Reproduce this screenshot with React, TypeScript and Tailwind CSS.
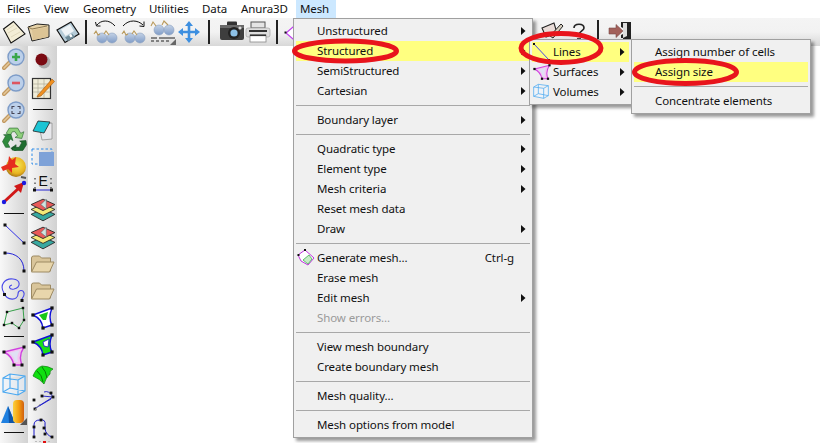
import React from "react";

type P = { className?: string };

const Doc = ({ className }: P) => (
  <svg className={className} width="24" height="24" viewBox="0 0 24 24">
    <path d="M1.5 9 L11.5 1.5 L23 14 L9 23 Z" fill="#f3edd6" stroke="#111" strokeWidth="1.1" />
    <path d="M5 10 L12 5 M6 13 L15 8 M9 17 L18 12" stroke="#e0d8bc" strokeWidth="1" />
  </svg>
);
const Folder = ({ className, w = 24 }: P & { w?: number }) => (
  <svg className={className} width={w} height="24" viewBox="0 0 24 24">
    <path d="M1 7 L10 4 L22 5 L22 17 L5 21 Z" fill="#e6d2a8" stroke="#222" strokeWidth="1" />
    <path d="M1 7 L5 9 L20 6" fill="none" stroke="#8f7a52" strokeWidth="1" />
    <path d="M5 10 L21 7 L21 17 L6 20 Z" fill="#dcc495" />
  </svg>
);
const Floppy = ({ className }: P) => (
  <svg className={className} width="24" height="24" viewBox="0 0 24 24">
    <path d="M1 10 L15 2 L23 14 L9 22.5 Z" fill="#b6ccd8" stroke="#111" strokeWidth="1.2" />
    <path d="M5 9.5 L14 4.5 L18 11 L9.5 16 Z" fill="#eef3f6" />
    <path d="M9 17.5 L16 13.5 L19 17 L12 21 Z" fill="#6f8c9a" />
    <rect x="13" y="15" width="2.4" height="3" fill="#fff" transform="rotate(-30 13 15)" />
  </svg>
);
const Glasses = ({ className, kind }: P & { kind: "l" | "r" | "d" }) => (
  <svg className={className} width="28" height="26" viewBox="0 0 28 26">
    <defs>
      <linearGradient id="gl" x1="0" y1="0" x2="0" y2="1">
        <stop offset="0" stopColor="#c5d3e6" />
        <stop offset="1" stopColor="#7f9cc7" />
      </linearGradient>
    </defs>
    {kind === "d" ? (
      <g>
        <circle cx="10" cy="11" r="5" fill="url(#gl)" stroke="#8aa0c0" strokeWidth=".6" />
        <circle cx="20" cy="11" r="5" fill="url(#gl)" stroke="#8aa0c0" strokeWidth=".6" />
        <path d="M2 7 L4 3 L7 7 M13 6 L15 2 L19 6" fill="none" stroke="#b99a5c" strokeWidth="1.1" />
        <path d="M2 19 H8 M10 19 H26 M2 22 H5 M7 22 H10 M12 22 H15 M17 22 H20" stroke="#222" strokeWidth="1" />
        <path d="M27 20 V26 H21 Z" fill="#666" />
      </g>
    ) : (
      <g>
        <circle cx="9" cy="19" r="5" fill="url(#gl)" stroke="#8aa0c0" strokeWidth=".6" />
        <circle cx="19" cy="19" r="5" fill="url(#gl)" stroke="#8aa0c0" strokeWidth=".6" />
        <path d="M1 15 L3 12 L5 16 L7 15 M11 15 L13 12 L16 16" fill="none" stroke="#b99a5c" strokeWidth="1.1" />
        {kind === "l" ? (
          <path d="M22 7 C16 0 8 1 4 6 M2.5 3 L3.5 7 L7.5 7" fill="none" stroke="#111" strokeWidth="1" />
        ) : (
          <path d="M2 7 C8 0 17 1 22 6 M23 2.5 L23 7.5 L18.5 7" fill="none" stroke="#111" strokeWidth="1" />
        )}
      </g>
    )}
  </svg>
);
const Move = ({ className }: P) => (
  <svg className={className} width="24" height="24" viewBox="0 0 24 24">
    <path d="M12 1 L16 6 H13.3 V10.7 H18 V8 L23 12 L18 16 V13.3 H13.3 V18 H16 L12 23 L8 18 H10.7 V13.3 H6 V16 L1 12 L6 8 V10.7 H10.7 V6 H8 Z" fill="#3d8fe0" />
  </svg>
);
const Camera = ({ className }: P) => (
  <svg className={className} width="26" height="24" viewBox="0 0 26 24">
    <rect x="8" y="1.5" width="10" height="5" rx="1" fill="#333" />
    <rect x="1" y="5" width="24" height="15" rx="2" fill="#3e3e3e" />
    <rect x="1" y="5" width="24" height="3" fill="#6a6a6a" />
    <circle cx="15" cy="13" r="6" fill="#222" />
    <circle cx="15" cy="13" r="3.6" fill="#8cc0e6" />
    <circle cx="21" cy="8" r="1.6" fill="#ddd" />
  </svg>
);
const Printer = ({ className }: P) => (
  <svg className={className} width="26" height="24" viewBox="0 0 26 24">
    <rect x="6" y="2" width="14" height="6" fill="#e4e4e4" stroke="#555" strokeWidth="1" />
    <rect x="1" y="8" width="24" height="9" rx="2" fill="#dedede" stroke="#a4a4a4" strokeWidth=".7" />
    <rect x="4" y="10" width="18" height="2" fill="#333" />
    <rect x="5" y="15" width="16" height="7" fill="#fff" stroke="#888" strokeWidth=".8" />
    <rect x="5" y="14.5" width="16" height="1.6" fill="#333" />
  </svg>
);
const Purple = ({ className }: P) => (
  <svg className={className} width="14" height="24" viewBox="0 0 14 24">
    <path d="M3 13 L10 7 L14 10 V16 L10 19 Z" fill="#fff" stroke="#c040f0" strokeWidth="1.2" />
    <rect x="1.5" y="11.5" width="2" height="2" fill="#111" />
  </svg>
);
const PenTool = ({ className }: P) => (
  <svg className={className} width="24" height="24" viewBox="0 0 24 24">
    <path d="M1 8 L13 3 L16 13 L5 17 Z" fill="#e9dcd8" stroke="#222" strokeWidth="1.1" />
    <path d="M9 16 L20 4 L22 6 L12 18 Z" fill="#d8d0c0" stroke="#222" strokeWidth="1" />
  </svg>
);
const Question = ({ className }: P) => (
  <svg className={className} width="16" height="24" viewBox="0 0 16 24">
    <path d="M3 8 C3 3 13 3 13 8 C13 11 8 11 8 15" fill="none" stroke="#222" strokeWidth="1.6" />
    <path d="M6 19 H10" stroke="#222" strokeWidth="1.6" />
  </svg>
);
const Exit = ({ className }: P) => (
  <svg className={className} width="24" height="24" viewBox="0 0 24 24">
    <path d="M13 2 H23 V20 L15 22 V18 L13 18 V15 L15 14 V8 L13 7 Z" fill="#222" />
    <path d="M15 3 H19 V16 L15 18 Z" fill="#ddd" />
    <path d="M1 8 H8 V4.5 L15 11 L8 17.5 V14 H1 Z" fill="#a2605a" stroke="#7a4a46" strokeWidth=".6" />
  </svg>
);
const TopSep = ({ className }: P) => <div className={"w-[2px] h-[24px] bg-[#222] shrink-0 " + (className ?? "")} />;

const Mag = ({ kind }: { kind: "plus" | "minus" | "fit" }) => (
  <svg width="24" height="24" viewBox="0 0 24 24">
    <path d="M2 21 L9 14" stroke="#c29a62" strokeWidth="4" strokeLinecap="round" />
    <path d="M2 21 L9 14" stroke="#e6c99a" strokeWidth="1.5" strokeLinecap="round" />
    <circle cx="14" cy="10" r="8" fill="#bcd0ea" stroke="#7d9cc8" strokeWidth="1.4" />
    {kind === "plus" && <path d="M14 6 V14 M10 10 H18" stroke="#3aa64a" strokeWidth="2.6" />}
    {kind === "minus" && <path d="M10 10 H18" stroke="#dd5560" strokeWidth="2.6" />}
    {kind === "fit" && (
      <path d="M10 9 V6.5 H12.5 M15.5 6.5 H18 V9 M18 11 V13.5 H15.5 M12.5 13.5 H10 V11" fill="none" stroke="#445" strokeWidth="1.1" />
    )}
  </svg>
);
const Recycle = () => (
  <svg width="25" height="24" viewBox="0 0 24 23">
    <path d="M7 1 H15 L18 6 L21 4.5 L19 11 L12.5 10 L15 8.5 L12.5 4.5 L10 4.5 L8 8 L4 6 Z" fill="#8fd07c" stroke="#2a6a30" strokeWidth=".6" />
    <path d="M0.5 14 L3.5 8.5 L1.5 7.5 L8.5 7 L10.5 13 L8 11.5 L5.5 15.5 L7.5 19.5 L3.5 19.5 Z" fill="#2f8a3c" stroke="#1c5e28" strokeWidth=".6" />
    <path d="M10 22.5 V19.5 H16.5 L19 15 L17 13.5 L23 13 L23.5 17 L20 22.5 H13.5 V24 L8.5 20.5 L13.5 17 V19" fill="#1f6d30" stroke="#174a22" strokeWidth=".6" />
  </svg>
);
const Sun = () => (
  <svg width="28" height="26" viewBox="0 0 28 26">
    <defs>
      <radialGradient id="sn" cx=".55" cy=".4" r=".7">
        <stop offset="0" stopColor="#f5e858" />
        <stop offset=".6" stopColor="#e8b420" />
        <stop offset="1" stopColor="#8a5810" />
      </radialGradient>
    </defs>
    <circle cx="16" cy="13" r="10" fill="url(#sn)" />
    <path d="M1 13 L8 10 L9 2 L12 6 L16 3 L15 10 L19 13 L12 14 L12 19 L8 15 L3 17 Z" fill="#e62e1e" />
    <path d="M21 23 L26 24" stroke="#555" strokeWidth="2" />
  </svg>
);
const RedArrow = () => (
  <svg width="26" height="26" viewBox="0 0 26 26">
    <path d="M4 22 L18 9" stroke="#d01818" strokeWidth="3" />
    <path d="M23 3 L20 14 L13 7 Z" fill="#d01818" />
    <circle cx="3" cy="23" r="2.2" fill="#1a1ae0" />
    <circle cx="23" cy="4" r="2.2" fill="#1a1ae0" />
  </svg>
);
const H = () => <div className="w-[20px] h-[1px] bg-[#111]" />;
const LineIco = () => (
  <svg width="24" height="24" viewBox="0 0 24 24">
    <path d="M3 3 L22 21" stroke="#3333e8" strokeWidth="1" />
    <rect x="1.5" y="1.5" width="3" height="3" fill="#111" />
    <rect x="20.5" y="19.5" width="3" height="3" fill="#111" />
  </svg>
);
const ArcIco = () => (
  <svg width="24" height="24" viewBox="0 0 24 24">
    <path d="M3 3 C14 3 22 9 22 21" fill="none" stroke="#2222d8" strokeWidth="1" />
    <rect x="1.5" y="1.5" width="3" height="3" fill="#111" />
    <rect x="20.5" y="19.5" width="3" height="3" fill="#111" />
  </svg>
);
const Spiral = () => (
  <svg width="26" height="26" viewBox="0 0 26 26">
    <path d="M3 16 C-2 8 4 1 12 2 C20 3 20 10 13 12 C8 13 7 9 11 8 M3 16 C6 24 17 24 17 17 C17 13 22 12 23 16 C24 20 19 23 21 23" fill="none" stroke="#4a4ae8" strokeWidth="1.1" />
    <rect x="2" y="16" width="3" height="3" fill="#111" />
    <rect x="19.5" y="22" width="3" height="3" fill="#111" />
  </svg>
);
const Poly = () => (
  <svg width="24" height="24" viewBox="0 0 24 24">
    <path d="M5 6 L21 2 L22 14 L17 22 L10 17 L2 19 L5 6" fill="none" stroke="#37a04a" strokeWidth="1" />
    {[[5, 6], [21, 2], [22, 14], [17, 22], [10, 17], [2, 19]].map(([x, y], i) => (
      <rect key={i} x={x - 1.2} y={y - 1.2} width="2.4" height="2.4" fill="#111" />
    ))}
  </svg>
);
const Surface = ({ small }: { small?: boolean }) => (
  <svg width={small ? 18 : 24} height={small ? 18 : 24} viewBox="0 0 24 24">
    <path d="M2 8 L22 3 Q16 12 20 21 L12 21 Q10 12 2 8 Z" fill="#f4c4f0" stroke="#d040e0" strokeWidth="1.4" />
    <path d="M7 9 L18 6 Q14 12 16 18 L13 18 Q12 12 7 9 Z" fill="#e0e0f4" />
    {[[2, 8], [22, 3], [20, 21], [12, 21]].map(([x, y], i) => (
      <rect key={i} x={x - 1.5} y={y - 1.5} width="3" height="3" fill="#111" />
    ))}
  </svg>
);
const Cube = ({ small }: { small?: boolean }) => (
  <svg width={small ? 16 : 24} height={small ? 16 : 24} viewBox="0 0 24 24">
    <path d="M1 6 L8 2 L23 4 L23 19 L16 23 L1 20 Z M1 6 L16 8 L23 4 M16 8 V23 M8 2 V16 L1 20 M8 16 L23 19" fill="#eef6ff" fillOpacity=".5" stroke="#4aa8f0" strokeWidth="1.1" />
  </svg>
);
const Solids = () => (
  <svg width="28" height="28" viewBox="0 0 28 28">
    <defs>
      <linearGradient id="cy" x1="0" y1="0" x2="1" y2="0">
        <stop offset="0" stopColor="#fbd040" />
        <stop offset=".5" stopColor="#f5a010" />
        <stop offset="1" stopColor="#d06010" />
      </linearGradient>
    </defs>
    <path d="M8 8 L15 25 H1 Z" fill="#1f80e0" />
    <path d="M8 8 L15 25 H9 Z" fill="#0f55a8" />
    <rect x="13" y="2" width="11" height="23" rx="4" fill="url(#cy)" />
    <path d="M27 20 V27 H20 Z" fill="#555" />
  </svg>
);
const Dot = () => (
  <svg width="18" height="18" viewBox="0 0 18 18">
    <circle cx="10" cy="10" r="6.5" fill="#aaa" />
    <circle cx="7.5" cy="7.5" r="6" fill="#7a0a12" />
  </svg>
);
const Note = () => (
  <svg width="24" height="24" viewBox="0 0 24 24">
    <rect x="1.5" y="2.5" width="18" height="20" fill="#efecd8" stroke="#333" strokeWidth="1.2" />
    <path d="M2 8 H19 M2 12 H19 M2 16 H19 M7 3 V22 M13 3 V22" stroke="#b0ad98" strokeWidth=".7" />
    <path d="M7 19 L21 3 L23.5 5.5 L10 20 L6 21 Z" fill="#f09020" stroke="#a05a10" strokeWidth=".6" />
  </svg>
);
const Eraser = () => (
  <svg width="22" height="22" viewBox="0 0 22 22">
    <path d="M7 6 L20 4 V20 L10 21 Z" fill="#e8e8ec" stroke="#888" strokeWidth=".7" />
    <path d="M1 12 L6 2 L18 3 L12 14 Z" fill="#1cc4d4" stroke="#222" strokeWidth=".8" />
  </svg>
);
const RectIco = () => (
  <svg width="24" height="20" viewBox="0 0 24 20">
    <rect x="1" y="2" width="20" height="15" fill="none" stroke="#2a8ae8" strokeWidth="1" strokeDasharray="2.5 2" />
    <rect x="8" y="5" width="15" height="14" fill="#7ea2d8" />
  </svg>
);
const EIco = () => (
  <svg width="24" height="24" viewBox="0 0 24 24">
    <path d="M3 19 H21" stroke="#2222d0" strokeWidth="1" />
    <path d="M4 7 V17 M20 7 V17" stroke="#111" strokeWidth="1" strokeDasharray="1.5 3" />
    <rect x="2" y="17.5" width="3" height="3" fill="#111" />
    <rect x="19" y="17.5" width="3" height="3" fill="#111" />
    <text x="12" y="15" textAnchor="middle" fontSize="14" fontFamily="Liberation Sans" fill="#111">E</text>
  </svg>
);
const Layers = () => (
  <svg width="26" height="26" viewBox="0 0 24 24">
    <path d="M1 16 L12 11 L23 16 L12 22 Z" fill="#38a8a0" stroke="#222" strokeWidth=".8" />
    <path d="M1 11.5 L12 6.5 L23 11.5 L12 17 Z" fill="#f4e878" stroke="#222" strokeWidth=".8" />
    <path d="M1 7 L12 2 L23 7 L12 12.5 Z" fill="#e85a5a" stroke="#222" strokeWidth=".8" />
    <path d="M10 7 L15 2 V11 Z" fill="#cfe4e0" stroke="#4a6a70" strokeWidth=".5" />
  </svg>
);
const BigFolder = () => (
  <svg width="25" height="24" viewBox="0 0 24 24">
    <path d="M1 19 V6 Q1 4 3 4 H9 L11 6 H20 V19 Z" fill="#d9c59a" stroke="#9d8a62" strokeWidth="1" />
    <path d="M1 20 L6 10 H23.5 L19 20 Z" fill="#e8d6ac" stroke="#9d8a62" strokeWidth="1" />
  </svg>
);
const Mesh1 = ({ fill }: { fill?: boolean }) => (
  <svg width="24" height="24" viewBox="0 0 24 24">
    <path d="M2 9 L21 2 Q17 12 21 19 L12 22 Q11 13 2 9 Z" fill={fill ? "#18e018" : "#fff"} stroke="#1010d8" strokeWidth="1.4" />
    {fill ? (
      <path d="M12 9 L18 6 L17 14 L13 13 Z" fill="#fff" stroke="#1010d8" strokeWidth=".8" />
    ) : (
      <path d="M8 9 L17 6 L15 14 L12 14 Z" fill="#18c818" />
    )}
    {[[2, 9], [21, 2], [21, 19], [12, 22]].map(([x, y], i) => (
      <rect key={i} x={x - 1.6} y={y - 1.6} width="3.2" height="3.2" fill="#111" />
    ))}
  </svg>
);
const Mesh3 = () => (
  <svg width="24" height="22" viewBox="0 0 22 22">
    <path d="M1 12 Q4 4 10 2 Q16 2 21 5 Q17 7 18 10 Q14 13 12 20 Q8 15 1 12 Z" fill="#10e010" stroke="#067a06" strokeWidth=".7" />
    <path d="M5 7 Q10 11 11 18 M10 3 Q14 7 15 14" fill="none" stroke="#067a06" strokeWidth="1" />
  </svg>
);
const Lines1 = () => (
  <svg width="24" height="24" viewBox="0 0 24 24">
    <path d="M3 20 L22 8 L11 7 M22 8 Q18 1 13 3 M3 20 L20 10" fill="none" stroke="#1818c8" strokeWidth=".9" />
    {[[3, 11], [11, 7], [20, 4], [22, 8], [4, 20]].map(([x, y], i) => (
      <rect key={i} x={x - 1.4} y={y - 1.4} width="2.8" height="2.8" fill="#111" />
    ))}
    <path d="M3 22 L9 15" stroke="#aaa" strokeWidth="1" />
  </svg>
);
const Lines2 = () => (
  <svg width="24" height="24" viewBox="0 0 24 24">
    <path d="M3 21 L3 9 Q3 4 9 4 Q15 3 14 9 L14 13 Q15 19 21 21" fill="none" stroke="#1818c8" strokeWidth="1" />
    {[[3, 21], [3, 11], [10, 4], [13, 12], [14, 18], [21, 21]].map(([x, y], i) => (
      <rect key={i} x={x - 1.4} y={y - 1.4} width="2.8" height="2.8" fill="#111" />
    ))}
  </svg>
);
const GenMesh = () => (
  <svg width="18" height="18" viewBox="0 0 18 18">
    <path d="M1 6 L8 1 L17 9 L11 16 L4 12 Z" fill="#fff" stroke="#c030e0" strokeWidth="1" />
    <path d="M6 11 L12 6 L15 10 L11 15 Z" fill="#c8ecc8" stroke="#40b050" strokeWidth=".8" />
    <rect x=".5" y="5" width="2" height="2" fill="#111" />
    <rect x="7" y="0" width="2" height="2" fill="#111" />
  </svg>
);
const Chevron = () => (
  <svg width="5" height="8" viewBox="0 0 5 8" className="shrink-0">
    <path d="M0 0 L4.5 4 L0 8 Z" fill="#111" />
  </svg>
);

function Cell({ h, children }: { h: string; children?: React.ReactNode }) {
  return <div className={"flex items-center justify-center shrink-0 " + h}>{children}</div>;
}

type Row = { t: string; arrow?: boolean; hi?: boolean; ic?: React.ReactNode; off?: boolean };

function MenuRow({ t, arrow, hi, ic, kb, off }: Row & { kb?: string }) {
  return (
    <div className={"relative flex items-center h-[20px] pl-[21px] pr-[4px] " + (hi ? "bg-[#ffff80]" : "")}>
      {ic && <span className="absolute left-[1px] top-[1px]">{ic}</span>}
      <span className={"flex-1 whitespace-nowrap " + (off ? "text-[#9a9a9a]" : "text-[#111]")}>{t}</span>
      {kb && <span className="mr-[12px] text-[#111]">{kb}</span>}
      {arrow && <Chevron />}
    </div>
  );
}
const MSep = () => <div className="h-[1px] my-[4px] bg-[#a8a8a8]" />;

export default function App() {
  return (
    <div className="relative w-[820px] h-[443px] overflow-hidden bg-white text-[11.5px] tracking-[-0.1px] text-[#111] font-['Noto_Sans','Liberation_Sans',sans-serif]">
      {/* menu bar */}
      <div className="flex h-[18px] bg-white items-center">
        <div className="w-[37px] pl-[7px]">Files</div>
        <div className="w-[39px] pl-[7px]">View</div>
        <div className="w-[66px] pl-[7px]">Geometry</div>
        <div className="w-[53px] pl-[7px]">Utilities</div>
        <div className="w-[39px] pl-[7px]">Data</div>
        <div className="w-[62px] pl-[7px]">Anura3D</div>
        <div className="w-[40px] h-[18px] pl-[4px] bg-[#cce8ff] flex items-center">Mesh</div>
      </div>
      {/* top toolbar */}
      <div className="flex items-center h-[28px] bg-gradient-to-b from-[#f4f4f4] via-[#f2f2f2] to-[#d8d8d8]">
        <Doc className="ml-[2px] shrink-0" />
        <Folder className="ml-[1px] shrink-0" />
        <Floppy className="ml-[5px] shrink-0" />
        <TopSep className="ml-[5px]" />
        <Glasses kind="l" className="ml-[6px] shrink-0" />
        <Glasses kind="r" className="shrink-0" />
        <Glasses kind="d" className="shrink-0" />
        <Move className="shrink-0" />
        <TopSep className="ml-[7px]" />
        <Camera className="ml-[9px] shrink-0" />
        <Printer className="shrink-0" />
        <TopSep className="ml-[5px]" />
        <Purple className="ml-[5px] shrink-0" />
        <PenTool className="ml-[244px] shrink-0" />
        <Question className="ml-[6px] shrink-0" />
        <TopSep className="ml-[10px]" />
        <Exit className="ml-[9px] shrink-0" />
      </div>
      {/* left toolbars */}
      <div className="flex h-[397px]">
        <div className="flex flex-col w-[28px] bg-gradient-to-r from-[#f8f8f8] to-[#d2d2d2] overflow-hidden">
          <div className="h-[6px] shrink-0" />
          <Cell h="h-[14px]"><Mag kind="plus" /></Cell>
          <Cell h="h-[38px]"><Mag kind="minus" /></Cell>
          <Cell h="h-[16px]"><Mag kind="fit" /></Cell>
          <Cell h="h-[38px]"><Recycle /></Cell>
          <Cell h="h-[18px]"><Sun /></Cell>
          <Cell h="h-[32px]"><RedArrow /></Cell>
          <Cell h="h-[10px]"><H /></Cell>
          <Cell h="h-[32px]"><LineIco /></Cell>
          <Cell h="h-[24px]"><ArcIco /></Cell>
          <Cell h="h-[32px]"><Spiral /></Cell>
          <Cell h="h-[24px]"><Poly /></Cell>
          <Cell h="h-[12px]"><H /></Cell>
          <Cell h="h-[28px]"><Surface /></Cell>
          <Cell h="h-[28px]"><Cube /></Cell>
          <Cell h="h-[28px]"><Solids /></Cell>
          <Cell h="h-[12px]"><H /></Cell>
        </div>
        <div className="flex flex-col w-[29px] bg-gradient-to-r from-[#f8f8f8] to-[#d2d2d2] overflow-hidden">
          <Cell h="h-[30px]"><Dot /></Cell>
          <Cell h="h-[24px]"><Note /></Cell>
          <Cell h="h-[18px]"><H /></Cell>
          <Cell h="h-[24px]"><Eraser /></Cell>
          <Cell h="h-[30px]"><RectIco /></Cell>
          <Cell h="h-[22px]"><EIco /></Cell>
          <Cell h="h-[32px]"><Layers /></Cell>
          <Cell h="h-[24px]"><Layers /></Cell>
          <Cell h="h-[28px]"><BigFolder /></Cell>
          <Cell h="h-[26px]"><BigFolder /></Cell>
          <Cell h="h-[28px]"><Mesh1 /></Cell>
          <Cell h="h-[26px]"><Mesh1 fill /></Cell>
          <Cell h="h-[34px]"><Mesh3 /></Cell>
          <Cell h="h-[18px]"><Lines1 /></Cell>
          <div className="h-[6px] shrink-0" />
          <Cell h="h-[24px]"><Lines2 /></Cell>
          <div className="flex justify-center items-center gap-[2px] h-[3px] shrink-0">
            <div className="w-[2px] h-[1px] bg-[#bbb]" />
            <div className="w-[2px] h-[1px] bg-[#bbb]" />
            <div className="w-[3px] h-[2px] bg-[#e01010]" />
            <div className="w-[2px] h-[1px] bg-[#bbb]" />
          </div>
        </div>
      </div>
      {/* main menu */}
      <div className="absolute left-[293px] top-[18px] w-[240px] h-[420px] bg-[#f0f0f0] border border-[#a0a0a0] pt-[2px] px-[2px] shadow-[3px_3px_3px_rgba(0,0,0,0.4)]">
        <MenuRow t="Unstructured" arrow />
        <MenuRow t="Structured" arrow hi />
        <MenuRow t="SemiStructured" arrow />
        <MenuRow t="Cartesian" arrow />
        <MSep />
        <MenuRow t="Boundary layer" arrow />
        <MSep />
        <MenuRow t="Quadratic type" arrow />
        <MenuRow t="Element type" arrow />
        <MenuRow t="Mesh criteria" arrow />
        <MenuRow t="Reset mesh data" />
        <MenuRow t="Draw" arrow />
        <MSep />
        <MenuRow t="Generate mesh..." kb="Ctrl-g" ic={<GenMesh />} />
        <MenuRow t="Erase mesh" />
        <MenuRow t="Edit mesh" arrow />
        <MenuRow t="Show errors..." off />
        <MSep />
        <MenuRow t="View mesh boundary" />
        <MenuRow t="Create boundary mesh" />
        <MSep />
        <MenuRow t="Mesh quality..." />
        <MSep />
        <MenuRow t="Mesh options from model" />
      </div>
      {/* submenu 1 */}
      <div className="absolute left-[529px] top-[39px] w-[103px] h-[66px] bg-[#f0f0f0] border border-[#a0a0a0] pt-[2px] px-[2px] shadow-[3px_3px_3px_rgba(0,0,0,0.4)]">
        <MenuRow t="Lines" arrow hi ic={<LineSmall />} />
        <MenuRow t="Surfaces" arrow ic={<Surface small />} />
        <MenuRow t="Volumes" arrow ic={<Cube small />} />
      </div>
      {/* submenu 2 */}
      <div className="absolute left-[631px] top-[39px] w-[180px] h-[75px] bg-[#f0f0f0] border border-[#a0a0a0] pt-[2px] px-[2px] shadow-[3px_3px_3px_rgba(0,0,0,0.4)]">
        <MenuRow t="Assign number of cells" />
        <MenuRow t="Assign size" hi />
        <MSep />
        <MenuRow t="Concentrate elements" />
      </div>
      {/* annotations */}
      <svg className="absolute inset-0 pointer-events-none" width="820" height="443" viewBox="0 0 820 443">
        <ellipse cx="345.5" cy="51" rx="51" ry="10" fill="none" stroke="#e8141c" strokeWidth="5" />
        <ellipse cx="561" cy="48" rx="40" ry="14.5" fill="none" stroke="#e8141c" strokeWidth="5" />
        <ellipse cx="685.5" cy="72" rx="51" ry="11.5" fill="none" stroke="#e8141c" strokeWidth="5" />
      </svg>
    </div>
  );
}

function LineSmall() {
  return (
    <svg width="18" height="18" viewBox="0 0 18 18">
      <path d="M1 1 L16 17" stroke="#4848e8" strokeWidth="1" />
      <rect x="0" y="0" width="2" height="2" fill="#111" />
      <rect x="15" y="16" width="2" height="2" fill="#111" />
    </svg>
  );
}
